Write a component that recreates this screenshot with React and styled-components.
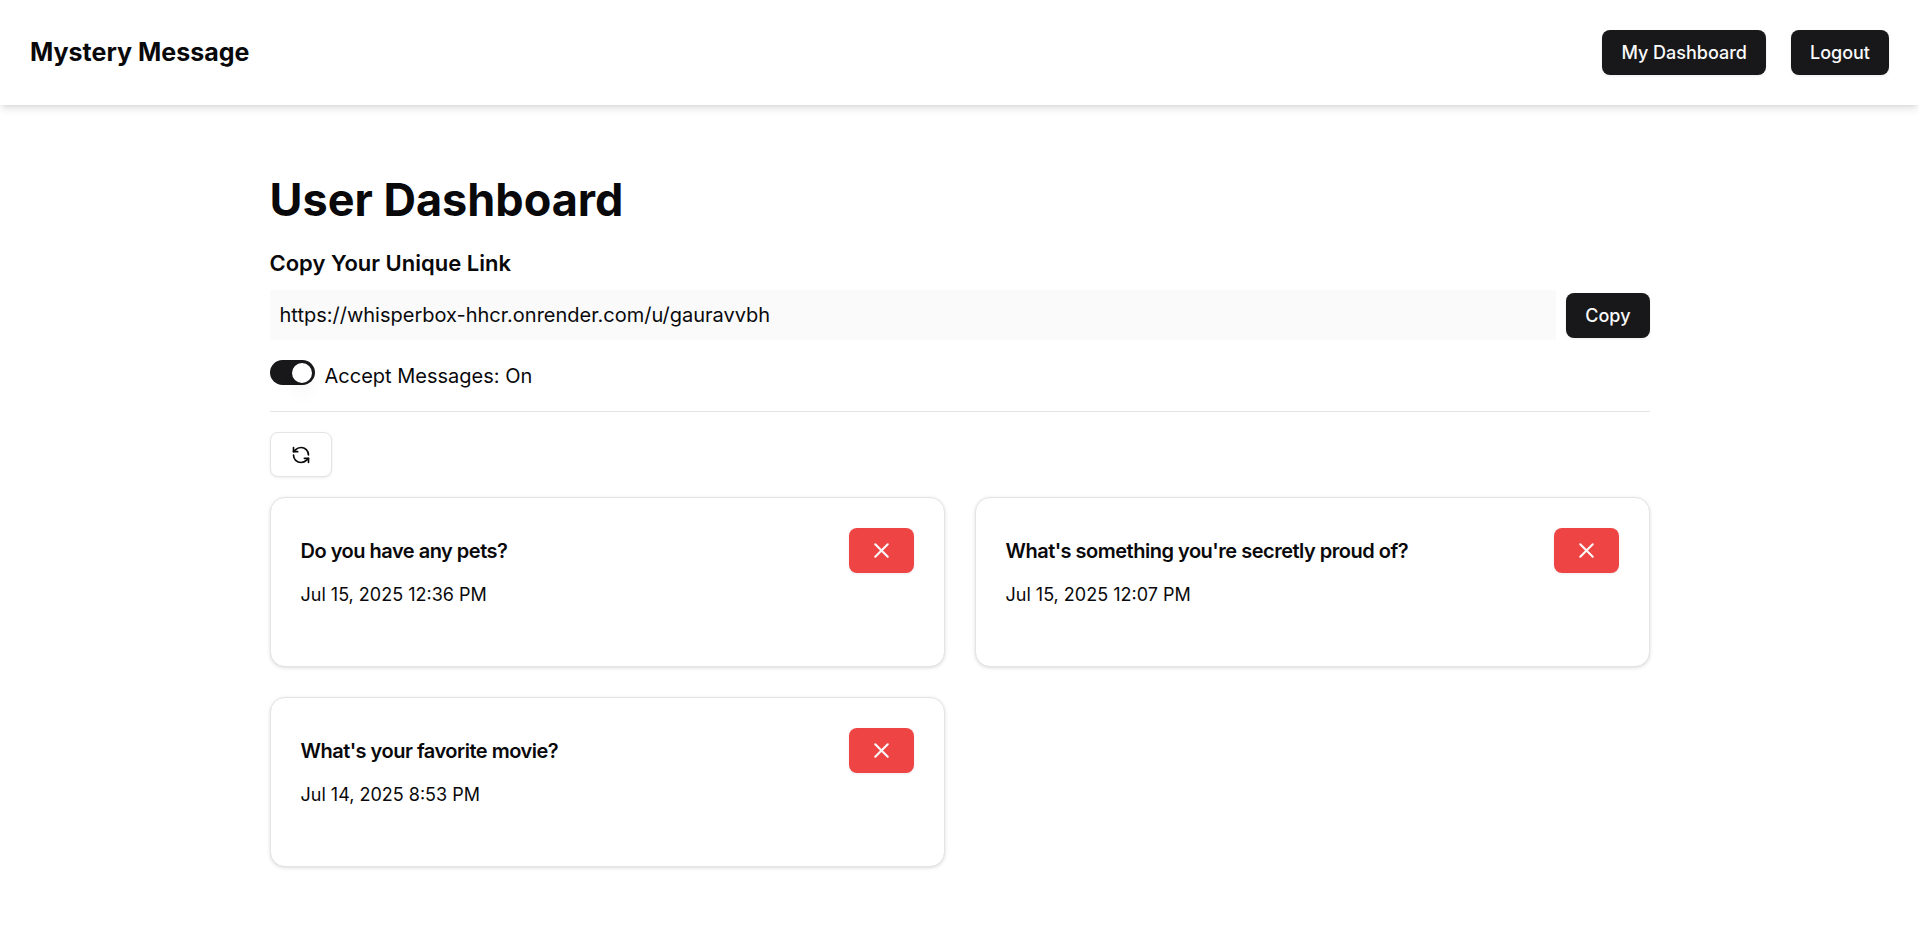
import React, { useState } from "react";
import styled, { createGlobalStyle, css } from "styled-components";
import { RefreshCcw, X } from "lucide-react";

const GlobalStyle = createGlobalStyle`
  *, *::before, *::after { box-sizing: border-box; }
  body {
    margin: 0;
    background: #ffffff;
    color: #09090b;
    font-family: Inter, "Liberation Sans", sans-serif;
    font-size: 20px;
    line-height: 30px;
  }
  h1, h2, h3, p { margin: 0; }
`;

const Navbar = styled.nav`
  padding: 30px;
  box-shadow: 0 5px 8px -1px rgba(0, 0, 0, 0.1), 0 3px 5px -3px rgba(0, 0, 0, 0.1);
`;

const NavContent = styled.div`
  display: flex;
  align-items: center;
  justify-content: space-between;
`;

const Brand = styled.a`
  color: inherit;
  font-size: 25px;
  font-weight: 700;
  line-height: 35px;
  text-decoration: none;
`;

const NavActions = styled.div`
  display: flex;
  gap: 25px;
`;

const variants = {
  primary: css`
    background: #18181b;
    color: #fafafa;
  `,
  outline: css`
    background: #ffffff;
    border: 1px solid #e4e4e7;
    color: #09090b;
  `,
  destructive: css`
    background: #ef4444;
    color: #fafafa;
  `,
};

const Button = styled.button`
  display: inline-flex;
  align-items: center;
  justify-content: center;
  flex-shrink: 0;
  height: 45px;
  padding: 0 ${({ $icon }) => ($icon ? 20 : 19)}px;
  border: 0;
  border-radius: 8px;
  box-shadow: 0 1px 3px rgba(0, 0, 0, 0.08);
  font-family: inherit;
  font-size: 18px;
  font-weight: 500;
  line-height: 25px;
  white-space: nowrap;
  cursor: pointer;
  ${({ $variant = "primary" }) => variants[$variant]}
`;

const Page = styled.main`
  max-width: 1440px;
  margin: 40px auto;
  padding: 30px;
`;

const Title = styled.h1`
  margin-bottom: 20px;
  font-size: 45px;
  font-weight: 700;
  line-height: 50px;
`;

const LinkSection = styled.section`
  margin-bottom: 20px;
`;

const SectionLabel = styled.label`
  display: block;
  margin-bottom: 8px;
  font-size: 22px;
  font-weight: 600;
  line-height: 37px;
`;

const LinkRow = styled.div`
  display: flex;
  align-items: center;
  gap: 10px;
`;

const LinkInput = styled.input`
  flex: 1;
  min-width: 0;
  height: 50px;
  padding: 10px;
  border: 0;
  background: #fafafa;
  color: inherit;
  font: inherit;
`;

const SwitchRow = styled.div`
  display: flex;
  align-items: flex-start;
  gap: 10px;
  margin-bottom: 18px;
`;

const Switch = styled.input`
  appearance: none;
  display: flex;
  align-items: center;
  width: 45px;
  height: 25px;
  margin: 0;
  padding: 0 3px;
  border-radius: 25px;
  background: #e4e4e7;
  cursor: pointer;

  &::before {
    content: "";
    width: 20px;
    height: 20px;
    border-radius: 50%;
    background: #ffffff;
    box-shadow: 0 12px 18px -4px rgba(0, 0, 0, 0.1), 0 5px 8px -5px rgba(0, 0, 0, 0.1);
  }

  &:checked {
    justify-content: flex-end;
    background: #18181b;
  }
`;

const SwitchLabel = styled.label`
  line-height: 33px;
`;

const Separator = styled.hr`
  height: 1px;
  margin: 0 0 20px;
  border: 0;
  background: #e4e4e7;
`;

const CardGrid = styled.div`
  display: grid;
  grid-template-columns: repeat(2, minmax(0, 1fr));
  gap: 30px;
  margin-top: 20px;

  @media (max-width: 900px) {
    grid-template-columns: minmax(0, 1fr);
  }
`;

const Card = styled.article`
  padding: 30px 30px 58px;
  border: 1px solid #e4e4e7;
  border-radius: 15px;
  background: #ffffff;
  box-shadow: 0 1px 4px rgba(0, 0, 0, 0.1), 0 1px 3px -1px rgba(0, 0, 0, 0.1);
`;

const CardHeader = styled.div`
  display: flex;
  align-items: center;
  justify-content: space-between;
  gap: 20px;
  margin-bottom: 8px;
`;

const CardTitle = styled.h3`
  font-size: 20px;
  font-weight: 600;
  line-height: 30px;
  letter-spacing: -0.025em;
`;

const CardDate = styled.p`
  font-size: 18px;
  line-height: 27px;
`;

const initialMessages = [
  { id: 1, content: "Do you have any pets?", date: "Jul 15, 2025 12:36 PM" },
  { id: 2, content: "What's something you're secretly proud of?", date: "Jul 15, 2025 12:07 PM" },
  { id: 3, content: "What's your favorite movie?", date: "Jul 14, 2025 8:53 PM" },
];

function MessageCard({ message, onDelete }) {
  return (
    <Card>
      <CardHeader>
        <CardTitle>{message.content}</CardTitle>
        <Button $icon $variant="destructive" aria-label="Delete message" onClick={() => onDelete(message.id)}>
          <X size={25} />
        </Button>
      </CardHeader>
      <CardDate>{message.date}</CardDate>
    </Card>
  );
}

export default function App() {
  const [messages, setMessages] = useState(initialMessages);
  const [accepting, setAccepting] = useState(true);
  const profileUrl = "https://whisperbox-hhcr.onrender.com/u/gauravvbh";

  return (
    <>
      <GlobalStyle />
      <Navbar>
        <NavContent>
          <Brand href="#">Mystery Message</Brand>
          <NavActions>
            <Button>My Dashboard</Button>
            <Button>Logout</Button>
          </NavActions>
        </NavContent>
      </Navbar>
      <Page>
        <Title>User Dashboard</Title>
        <LinkSection>
          <SectionLabel htmlFor="profile-link">Copy Your Unique Link</SectionLabel>
          <LinkRow>
            <LinkInput id="profile-link" type="text" value={profileUrl} readOnly />
            <Button onClick={() => navigator.clipboard?.writeText(profileUrl)}>Copy</Button>
          </LinkRow>
        </LinkSection>
        <SwitchRow>
          <Switch
            id="accept-messages"
            type="checkbox"
            role="switch"
            checked={accepting}
            onChange={(event) => setAccepting(event.target.checked)}
          />
          <SwitchLabel htmlFor="accept-messages">Accept Messages: {accepting ? "On" : "Off"}</SwitchLabel>
        </SwitchRow>
        <Separator />
        <Button $icon $variant="outline" aria-label="Refresh messages" onClick={() => setMessages(initialMessages)}>
          <RefreshCcw size={20} />
        </Button>
        <CardGrid>
          {messages.map((message) => (
            <MessageCard
              key={message.id}
              message={message}
              onDelete={(id) => setMessages(messages.filter((item) => item.id !== id))}
            />
          ))}
        </CardGrid>
      </Page>
    </>
  );
}
